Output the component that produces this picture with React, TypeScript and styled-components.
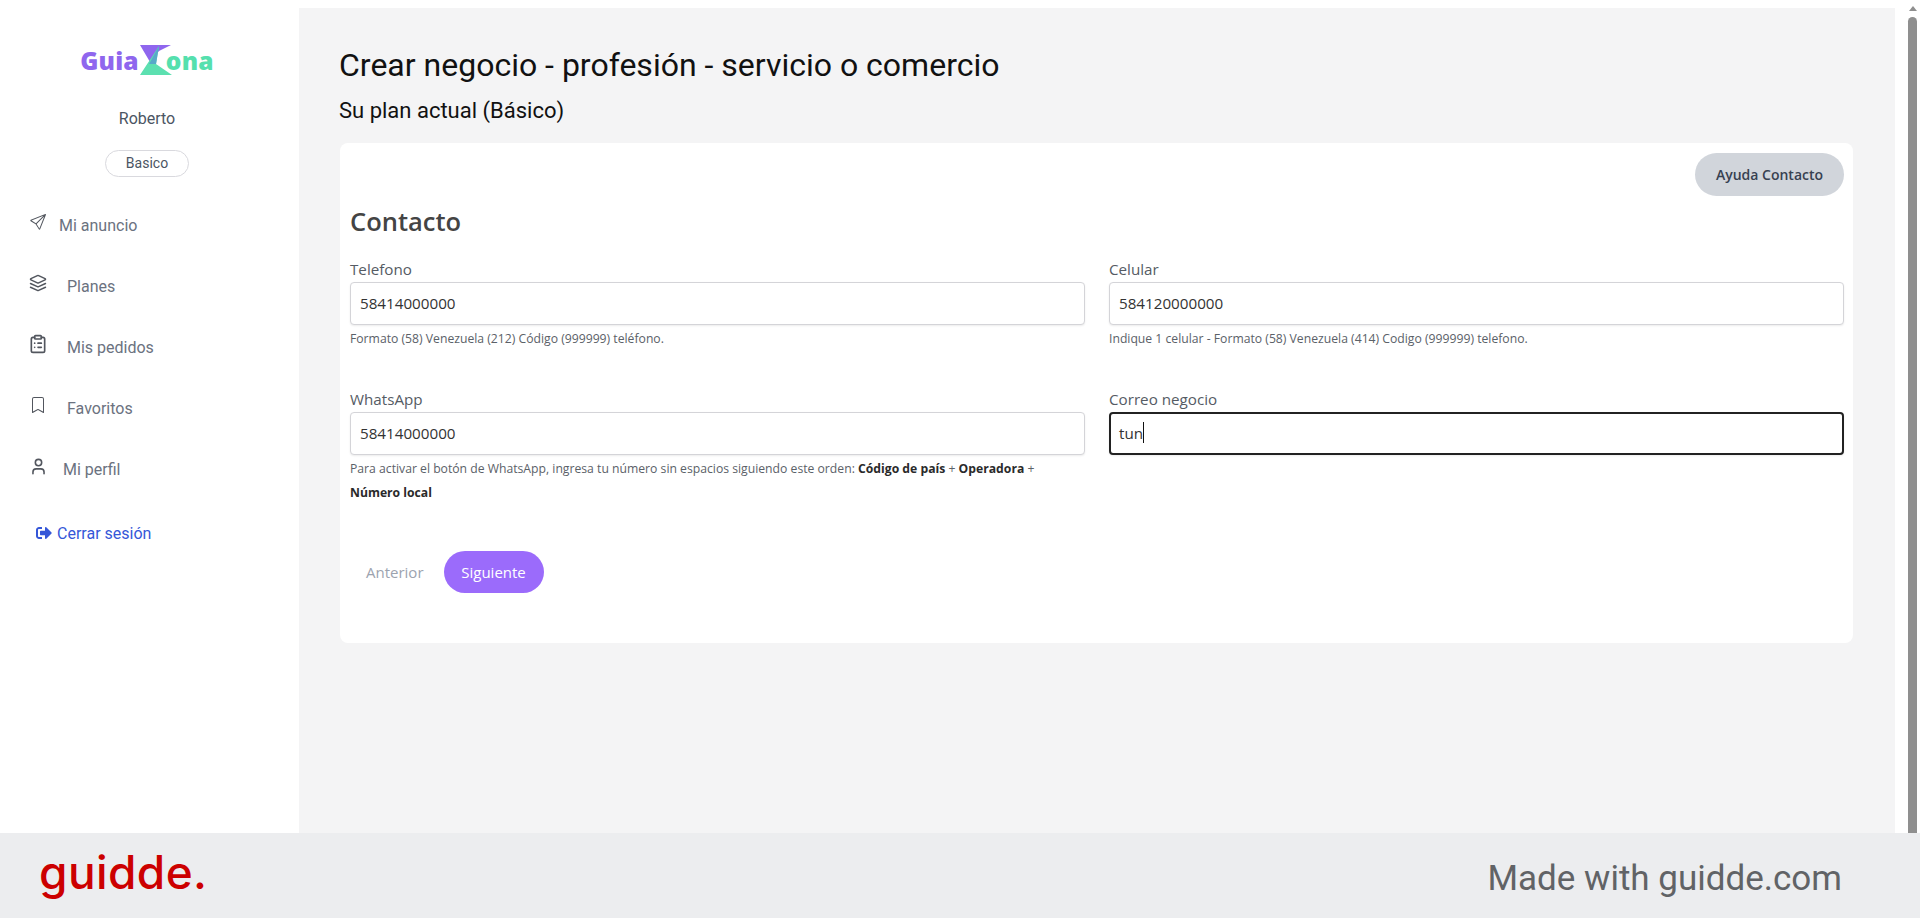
import React from 'react';
import styled, { createGlobalStyle } from 'styled-components';
import { BsSend, BsBookmark } from 'react-icons/bs';
import { LuClipboardList, LuLayers, LuUser } from 'react-icons/lu';
import { FaSignOutAlt } from 'react-icons/fa';

const GlobalStyle = createGlobalStyle`
  html, body {
    margin: 0;
    padding: 0;
    background: #fff;
    overflow: hidden;
  }
  * {
    box-sizing: border-box;
  }
`;

const Page = styled.div`
  display: flex;
  flex-direction: column;
  width: 1920px;
  height: 918px;
  overflow: hidden;
`;

const Top = styled.div`
  display: flex;
  flex: 1;
  min-height: 0;
`;

const Sidebar = styled.aside`
  display: flex;
  flex-direction: column;
  width: 299px;
  flex-shrink: 0;
  padding-top: 42px;
  font-family: Roboto, sans-serif;
`;

const Brand = styled.div`
  display: flex;
  justify-content: center;
  align-items: center;
  height: 36px;
  padding-right: 5px;
  font-family: 'Open Sans', sans-serif;
  font-weight: 800;
  font-size: 24.5px;
  letter-spacing: 0.2px;
`;

const BrandPart = styled.span<{ $color: string }>`
  color: ${(p) => p.$color};
`;

const BrandMark = styled.svg`
  width: 33px;
  height: 30px;
  margin: 0 -6px 0 0;
  flex-shrink: 0;
`;

const UserName = styled.div`
  margin-top: 31px;
  text-align: center;
  font-size: 16px;
  line-height: 20px;
  color: #4b5563;
  padding-right: 5px;
`;

const PlanPill = styled.div`
  align-self: center;
  width: 84px;
  height: 27px;
  margin: 21px 5px 0 0;
  border: 1px solid #d9d9de;
  border-radius: 14px;
  text-align: center;
  font-size: 14px;
  line-height: 25px;
  color: #4b5563;
`;

const Nav = styled.nav`
  display: flex;
  flex-direction: column;
  margin-top: 18px;
  padding-left: 30px;
`;

const NavItem = styled.a<{ $gap: number }>`
  display: flex;
  align-items: center;
  height: 61px;
  gap: ${(p) => p.$gap}px;
  font-size: 16px;
  color: #6b7280;
`;

const IconSlot = styled.span<{ $size: number }>`
  display: flex;
  justify-content: center;
  align-items: center;
  width: 16px;
  height: 16px;
  margin-top: -7px;
  flex-shrink: 0;
  color: #52565e;

  svg {
    width: ${(p) => p.$size}px;
    height: ${(p) => p.$size}px;
    flex-shrink: 0;
  }
`;

const Logout = styled.a`
  display: flex;
  align-items: center;
  gap: 5px;
  margin: 24px 0 0 6px;
  font-size: 16px;
  color: #3557d8;

  svg {
    width: 16px;
    height: 16px;
    margin-top: -2px;
  }
`;

const Main = styled.main`
  flex: 1;
  margin-top: 8px;
  padding: 34px 42px 0 41px;
  background: #f4f4f5;
`;

const Title = styled.h1`
  margin: 0 0 0 -1px;
  font-family: Roboto, sans-serif;
  font-weight: 400;
  font-size: 32px;
  line-height: 46px;
  color: #111;
`;

const Subtitle = styled.p`
  margin: 9px 0 0 -1px;
  font-family: Roboto, sans-serif;
  font-size: 22px;
  line-height: 28px;
  color: #111;
`;

const Card = styled.section`
  height: 500px;
  margin-top: 18px;
  padding: 10px 9px 0 10px;
  background: #fff;
  border-radius: 8px;
  font-family: 'Open Sans', sans-serif;
`;

const HelpRow = styled.div`
  display: flex;
  justify-content: flex-end;
`;

const HelpButton = styled.button`
  height: 43px;
  width: 149px;
  border: none;
  border-radius: 22px;
  background: #d1d5db;
  color: #374151;
  font-family: 'Open Sans', sans-serif;
  font-size: 14px;
  font-weight: 600;
`;

const SectionTitle = styled.h2`
  margin: 7px 0 0;
  font-size: 25.5px;
  font-weight: 600;
  line-height: 36px;
  color: #444;
`;

const FormGrid = styled.div`
  display: grid;
  grid-template-columns: 735px 735px;
  column-gap: 24px;
  margin-top: 18px;
`;

const Field = styled.div<{ $height: number }>`
  height: ${(p) => p.$height}px;
`;

const Label = styled.label`
  display: block;
  font-size: 15.2px;
  line-height: 24px;
  color: #555b64;
`;

const Input = styled.div<{ $focused?: boolean }>`
  display: flex;
  align-items: center;
  height: 43px;
  margin-top: 1px;
  padding: 0 0 2px ${(p) => (p.$focused ? '8px' : '9px')};
  background: #fff;
  border: ${(p) => (p.$focused ? '2px solid #222' : '1px solid #d4d4d8')};
  border-radius: 4px;
  box-shadow: 0 1px 2px rgba(0, 0, 0, 0.08);
  font-size: 15.2px;
  color: #333;
`;

const Caret = styled.span`
  display: inline-block;
  width: 1px;
  height: 21px;
  background: #111;
`;

const Hint = styled.p`
  margin: 2px 0 0;
  font-size: 12.2px;
  line-height: 24px;
  color: #5b6168;

  b {
    color: #2a2a2a;
    font-weight: 700;
  }
`;

const NoWrap = styled.b`
  white-space: nowrap;
`;

const Actions = styled.div`
  display: flex;
  align-items: center;
  margin-top: 7px;
`;

const PrevButton = styled.button`
  height: 42px;
  padding: 0 20px 0 16px;
  border: none;
  background: transparent;
  color: #9ca3af;
  font-family: 'Open Sans', sans-serif;
  font-size: 15px;
`;

const NextButton = styled.button`
  width: 100px;
  height: 42px;
  border: none;
  border-radius: 21px;
  background: #9b6bfb;
  color: #fff;
  font-family: 'Open Sans', sans-serif;
  font-size: 15px;
  font-weight: 500;
`;

const ScrollGutter = styled.div`
  display: flex;
  flex-direction: column;
  align-items: center;
  width: 25px;
  padding: 6px 0 0 10px;
  flex-shrink: 0;
`;

const ScrollArrow = styled.div`
  width: 0;
  height: 0;
  border-left: 4px solid transparent;
  border-right: 4px solid transparent;
  border-bottom: 5px solid #8f8f8f;
`;

const ScrollThumb = styled.div`
  flex: 1;
  width: 9px;
  margin-top: 6px;
  background: #8f8f8f;
  border-radius: 5px 5px 0 0;
`;

const Footer = styled.footer`
  display: flex;
  justify-content: space-between;
  align-items: center;
  height: 85px;
  padding: 0 78px 0 39px;
  background: #ecedef;
`;

const FooterLogo = styled.div`
  font-family: Inter, sans-serif;
  font-size: 46px;
  font-weight: 500;
  letter-spacing: 0.4px;
  color: #cc0000;
  line-height: 1;
  margin-top: -8px;
`;

const FooterText = styled.div`
  margin-top: 6px;
  font-family: Roboto, sans-serif;
  font-size: 35px;
  color: #616366;
`;

const navItems = [
  { label: 'Mi anuncio', icon: <BsSend />, size: 16, gap: 13 },
  { label: 'Planes', icon: <LuLayers />, size: 18, gap: 21 },
  { label: 'Mis pedidos', icon: <LuClipboardList />, size: 20, gap: 21 },
  { label: 'Favoritos', icon: <BsBookmark />, size: 16, gap: 21 },
  { label: 'Mi perfil', icon: <LuUser />, size: 19, gap: 17 },
];

const App = () => {
  return (
    <Page>
      <GlobalStyle />
      <Top>
        <Sidebar>
          <Brand>
            <BrandPart $color="#8f66ee">Guia</BrandPart>
            <BrandMark viewBox="0 0 33 30">
              <path d="M1 0h31L20 6l-9 11z" fill="#8f66ee" />
              <path d="M20 1 1 30h32L17 19z" fill="#5ce0b0" />
              <path d="M20 1 10 19l7 0z" fill="#57a9c9" />
            </BrandMark>
            <BrandPart $color="#55e0ae">ona</BrandPart>
          </Brand>
          <UserName>Roberto</UserName>
          <PlanPill>Basico</PlanPill>
          <Nav>
            {navItems.map((item) => (
              <NavItem key={item.label} $gap={item.gap}>
                <IconSlot $size={item.size}>{item.icon}</IconSlot>
                {item.label}
              </NavItem>
            ))}
            <Logout>
              <FaSignOutAlt />
              Cerrar sesión
            </Logout>
          </Nav>
        </Sidebar>
        <Main>
          <Title>Crear negocio - profesión - servicio o comercio</Title>
          <Subtitle>Su plan actual (Básico)</Subtitle>
          <Card>
            <HelpRow>
              <HelpButton>Ayuda Contacto</HelpButton>
            </HelpRow>
            <SectionTitle>Contacto</SectionTitle>
            <FormGrid>
              <Field $height={130}>
                <Label>Telefono</Label>
                <Input>58414000000</Input>
                <Hint>Formato (58) Venezuela (212) Código (999999) teléfono.</Hint>
              </Field>
              <Field $height={130}>
                <Label>Celular</Label>
                <Input>584120000000</Input>
                <Hint>Indique 1 celular - Formato (58) Venezuela (414) Codigo (999999) telefono.</Hint>
              </Field>
              <Field $height={157}>
                <Label>WhatsApp</Label>
                <Input>58414000000</Input>
                <Hint>
                  Para activar el botón de WhatsApp, ingresa tu número sin espacios siguiendo este orden:{' '}
                  <b>Código de país</b> + <b>Operadora</b> + <NoWrap>Número local</NoWrap>
                </Hint>
              </Field>
              <Field $height={157}>
                <Label>Correo negocio</Label>
                <Input $focused>
                  tun
                  <Caret />
                </Input>
              </Field>
            </FormGrid>
            <Actions>
              <PrevButton>Anterior</PrevButton>
              <NextButton>Siguiente</NextButton>
            </Actions>
          </Card>
        </Main>
        <ScrollGutter>
          <ScrollArrow />
          <ScrollThumb />
        </ScrollGutter>
      </Top>
      <Footer>
        <FooterLogo>guidde.</FooterLogo>
        <FooterText>Made with guidde.com</FooterText>
      </Footer>
    </Page>
  );
};

export default App;
